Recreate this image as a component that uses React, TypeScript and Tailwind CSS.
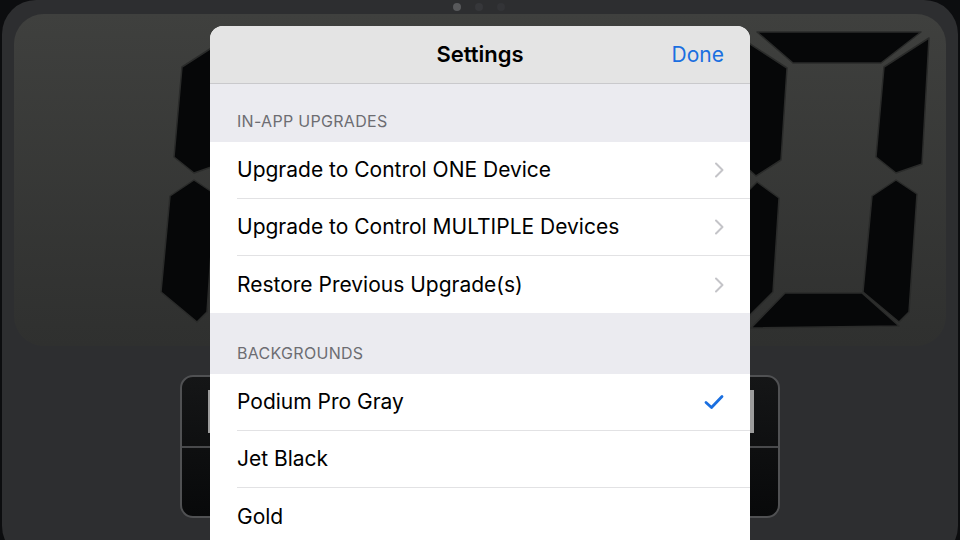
import React from "react";

const SEGMENTS = {
  top: "16,2 180,2 140,33 52,33",
  ul: "6,12 46,38 40,130 15,146 4,136",
  ur: "188,8 143,37 135,127 155,143 181,134",
  ll: "16,152 38,168 32,262 4,290 2,166",
  lr: "155,150 176,164 168,282 158,292 122,262 131,166",
  bottom: "44,263 121,263 158,296 10,298",
};

type Seg = keyof typeof SEGMENTS;

function Digit({ lit, className }: { lit: Seg[]; className?: string }) {
  return (
    <svg viewBox="0 0 190 300" className={className}>
      {lit.map((s) => (
        <polygon key={s} points={SEGMENTS[s]} fill="#060708" stroke="#2a2b2a" strokeWidth="1.5" strokeLinejoin="round" />
      ))}
    </svg>
  );
}

function Chevron() {
  return (
    <svg width="10" height="16" viewBox="0 0 10 16" className="shrink-0">
      <path d="M2 1.5 L8.5 8 L2 14.5" fill="none" stroke="#c4c4c8" strokeWidth="2" strokeLinecap="round" strokeLinejoin="round" />
    </svg>
  );
}

function Check() {
  return (
    <svg width="20" height="16" viewBox="0 0 20 16" className="shrink-0">
      <path d="M2 8.5 L7.5 13.5 L18 2.5" fill="none" stroke="#1a6fe0" strokeWidth="2.8" strokeLinecap="round" strokeLinejoin="round" />
    </svg>
  );
}

function SectionHeader({ title, tall }: { title: string; tall?: boolean }) {
  return (
    <div className={`bg-[#ebebf0] px-[27px] pb-[9px] flex items-end text-[16px] tracking-[0.3px] text-[#6d6d72] ${tall ? "h-[61px]" : "h-[58px]"}`}>
      {title}
    </div>
  );
}

function Row({ label, accessory, last }: { label: string; accessory?: React.ReactNode; last?: boolean }) {
  return (
    <div className="bg-white pl-[27px]">
      <div className={`h-[57px] flex items-center justify-between pr-[26px] ${last ? "" : "border-b border-[#e2e2e4]"}`}>
        <span className="text-[21px] text-black">{label}</span>
        {accessory}
      </div>
    </div>
  );
}

export default function App() {
  return (
    <div className="w-[960px] h-[540px] bg-[#0c0d0f] relative overflow-hidden" style={{ fontFamily: "Inter, 'Liberation Sans', sans-serif" }}>
      {/* device body */}
      <div className="absolute left-[2px] right-[2px] top-0 h-[560px] rounded-[34px] bg-[#2d2e30] flex flex-col">
        <div className="h-[14px] flex justify-center items-center gap-[14px] pr-[2px]">
          <div className="w-[8px] h-[8px] rounded-full bg-[#58595b]" />
          <div className="w-[8px] h-[8px] rounded-full bg-[#36373a]" />
          <div className="w-[8px] h-[8px] rounded-full bg-[#333437]" />
        </div>

        {/* display */}
        <div className="mx-[12px] h-[332px] rounded-[30px] bg-gradient-to-b from-[#3f403e] to-[#2f302f] flex justify-between px-[25px] pt-[16px]">
          <Digit lit={["ur", "lr"]} className="w-[190px] h-[300px]" />
          <Digit lit={["top", "ul", "ur", "ll", "lr", "bottom"]} className="w-[190px] h-[300px] -mr-[10px]" />
        </div>

        {/* buttons */}
        <div className="mt-[29px] flex justify-between px-[178px]">
          {[0, 1].map((i) => (
            <div key={i} className="w-[280px] h-[143px] rounded-[13px] border-2 border-[#505153] bg-gradient-to-b from-[#151617] to-[#08090a] flex flex-col overflow-hidden">
              <div className={`h-[71px] border-b-2 border-[#48494b] flex pt-[13px] ${i === 0 ? "pl-[26px]" : "justify-end pr-[24px]"}`}>
                <div className="w-[6px] h-[43px] bg-[#9c9c9c]" />
              </div>
              <div className="flex-1" />
            </div>
          ))}
        </div>
      </div>

      {/* settings sheet */}
      <div className="absolute left-[210px] top-[26px] w-[540px] h-[530px] rounded-t-[13px] overflow-hidden bg-white flex flex-col">
        <div className="h-[58px] bg-[#e4e4e4] border-b border-[#c9c9cc] relative flex items-center justify-center">
          <span className="text-[22px] font-semibold text-black">Settings</span>
          <span className="absolute right-[26px] text-[21px] text-[#1a6fe0]">Done</span>
        </div>
        <SectionHeader title="IN-APP UPGRADES" />
        <Row label="Upgrade to Control ONE Device" accessory={<Chevron />} />
        <Row label="Upgrade to Control MULTIPLE Devices" accessory={<Chevron />} />
        <Row label="Restore Previous Upgrade(s)" accessory={<Chevron />} last />
        <SectionHeader title="BACKGROUNDS" tall />
        <Row label="Podium Pro Gray" accessory={<Check />} />
        <Row label="Jet Black" />
        <Row label="Gold" last />
      </div>
    </div>
  );
}
